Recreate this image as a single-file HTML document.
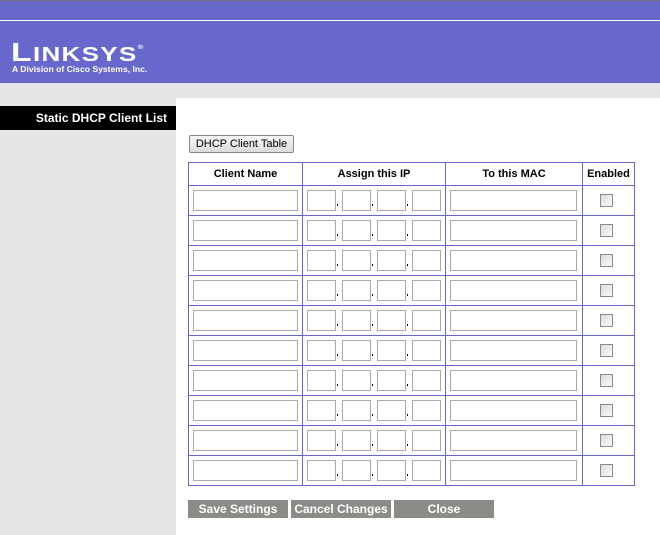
<!DOCTYPE html>
<html><head><meta charset="utf-8"><style>
*{margin:0;padding:0;box-sizing:border-box}
body{width:660px;height:535px;overflow:hidden;background:#e6e6e6;font-family:"Liberation Sans",Arial,sans-serif;position:relative}
.a{position:absolute}
.in{position:absolute;border:1px solid #aaa;background:#fff;height:21px}
.cb{position:absolute;width:13px;height:13px;border:1px solid #8a8a8a;background:linear-gradient(135deg,#dcdce0,#fafafa)}
.dot{position:absolute;width:1px;height:2px;background:#000}
.btn{position:absolute;top:500px;height:18px;background:#8b8c88;color:#fff;font-weight:bold;font-size:12px;text-align:center;line-height:18px}
th{font-size:11px;font-weight:bold;height:23px}
td,th{border:1px solid #6666cc;padding:0;position:relative}
td{height:30px}
</style></head><body>
<div class="a" style="left:0;top:0;width:660px;height:1px;background:#777"></div>
<div class="a" style="left:0;top:1px;width:660px;height:82px;background:#6767cc"></div>
<div class="a" style="left:0;top:20px;width:660px;height:1px;background:#fff"></div>
<div class="a" style="left:11px;top:35px;color:#fff;font-weight:bold;font-size:26px;letter-spacing:1px;line-height:26px;transform:scaleX(1.3);transform-origin:left">L<span style="font-size:20px">INKSYS</span><sup style="font-size:6px;vertical-align:12px">®</sup></div>
<div class="a" style="left:12px;top:64px;color:#fff;font-weight:bold;font-size:8.6px;line-height:10px">A Division of Cisco Systems, Inc.</div>
<div class="a" style="left:176px;top:98px;width:484px;height:437px;background:#fff"></div>
<div class="a" style="left:0;top:106px;width:176px;height:24px;background:#000;color:#fff;font-weight:bold;font-size:12px;line-height:24px;text-align:right;padding-right:9px">Static DHCP Client List</div>
<div class="a" style="left:189px;top:135px;width:105px;height:18px;border:1px solid #888;border-radius:2px;background:linear-gradient(#f6f6f6,#dcdcdc);font-size:11px;text-align:center;line-height:16px">DHCP Client Table</div>
<table class="a" style="left:188px;top:162px;border-collapse:collapse;width:446px;table-layout:fixed">
<colgroup><col style="width:114px"><col style="width:143px"><col style="width:137px"><col style="width:52px"></colgroup>
<tr><th>Client Name</th><th>Assign this IP</th><th>To this MAC</th><th>Enabled</th></tr>
<tr><td></td><td></td><td></td><td></td></tr>
<tr><td></td><td></td><td></td><td></td></tr>
<tr><td></td><td></td><td></td><td></td></tr>
<tr><td></td><td></td><td></td><td></td></tr>
<tr><td></td><td></td><td></td><td></td></tr>
<tr><td></td><td></td><td></td><td></td></tr>
<tr><td></td><td></td><td></td><td></td></tr>
<tr><td></td><td></td><td></td><td></td></tr>
<tr><td></td><td></td><td></td><td></td></tr>
<tr><td></td><td></td><td></td><td></td></tr>
</table>
<div id="f"></div>
<script>
var h='';
for(var i=0;i<10;i++){var y=190+i*30;
h+='<div class="in" style="left:193px;top:'+y+'px;width:105px"></div>';
[307,342,377,412].forEach(function(x,k){h+='<div class="in" style="left:'+x+'px;top:'+y+'px;width:29px"></div>';if(k<3)h+='<div class="dot" style="left:'+(x+30)+'px;top:'+(y+14)+'px"></div>';});
h+='<div class="in" style="left:450px;top:'+y+'px;width:127px"></div>';
h+='<div class="cb" style="left:600px;top:'+(y+4)+'px"></div>';}
document.getElementById('f').innerHTML=h;
</script>
<div class="btn" style="left:188px;width:100px">Save Settings</div>
<div class="btn" style="left:291px;width:100px">Cancel Changes</div>
<div class="btn" style="left:394px;width:100px">Close</div>
</body></html>
